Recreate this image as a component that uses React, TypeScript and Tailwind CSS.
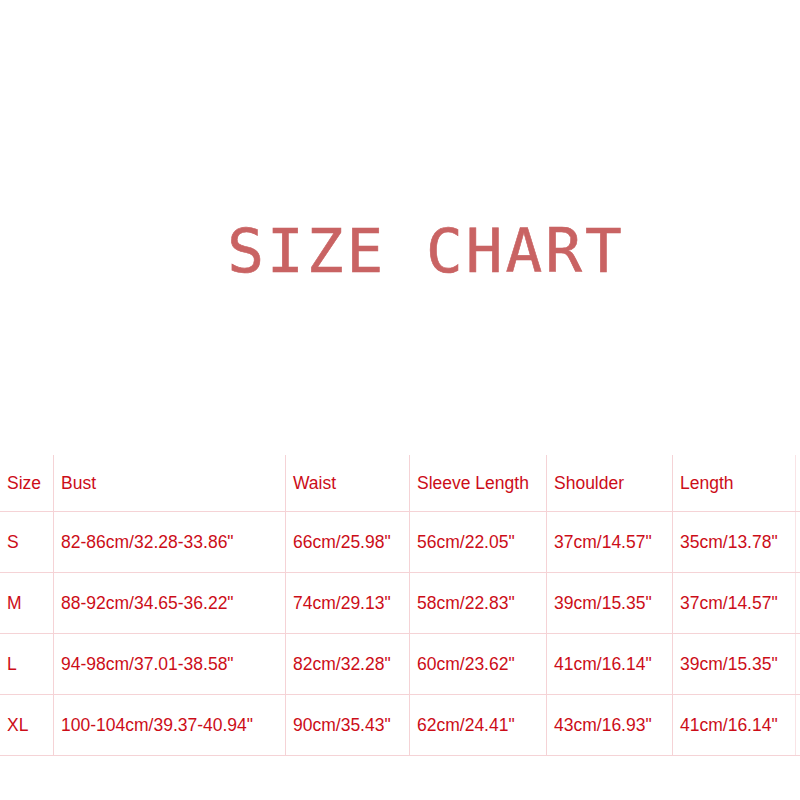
const headers = ['Size', 'Bust', 'Waist', 'Sleeve Length', 'Shoulder', 'Length']

const rows = [
  ['S', '82-86cm/32.28-33.86"', '66cm/25.98"', '56cm/22.05"', '37cm/14.57"', '35cm/13.78"'],
  ['M', '88-92cm/34.65-36.22"', '74cm/29.13"', '58cm/22.83"', '39cm/15.35"', '37cm/14.57"'],
  ['L', '94-98cm/37.01-38.58"', '82cm/32.28"', '60cm/23.62"', '41cm/16.14"', '39cm/15.35"'],
  ['XL', '100-104cm/39.37-40.94"', '90cm/35.43"', '62cm/24.41"', '43cm/16.93"', '41cm/16.14"'],
]

const cols = 'grid grid-cols-[54px_232px_124px_137px_126px_123px_4px]'

const Row = ({ cells, header }: { cells: string[]; header?: boolean }) => {
  return (
    <div className={`${cols} ${header ? 'h-[57px]' : 'h-[61px]'} border-b border-[#f5d3d6]`}>
      {cells.map((c, i) => (
        <div
          key={i}
          className={`flex items-center pl-[7px] border-r ${i === cells.length - 1 ? 'border-[#f9e4e6]' : 'border-[#f5d3d6]'}`}
        >
          {c}
        </div>
      ))}
      <div />
    </div>
  )
}

export default function App() {
  return (
    <div className="w-[800px] h-[800px] bg-white overflow-hidden">
      {/* Заголовок */}
      <div className="pt-[220px] pl-[52px] h-[280px] text-center leading-none text-[61px] tracking-[3px] text-[#c96363] font-['DejaVu_Sans_Mono',monospace] whitespace-pre [-webkit-text-stroke:0.6px_#c96363]">
        SIZE CHART
      </div>
      {/* Таблица размеров */}
      <div className="mt-[175px] text-[17.5px] text-[#cc0d18] font-['Liberation_Sans',Arial,sans-serif]">
        <Row cells={headers} header />
        {rows.map((r) => (
          <Row key={r[0]} cells={r} />
        ))}
      </div>
    </div>
  )
}
